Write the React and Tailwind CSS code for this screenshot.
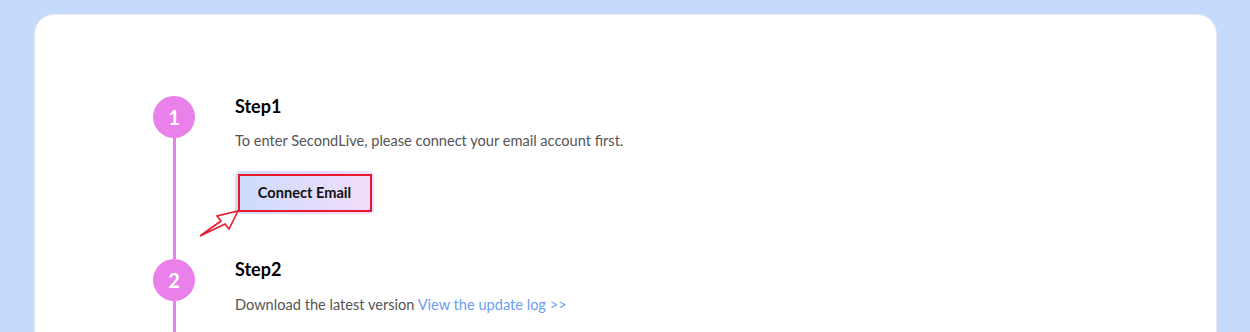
import React from "react";

function StepCircle({ n }) {
  return (
    <span className="flex h-[42px] w-[42px] shrink-0 items-center justify-center rounded-full bg-[#ea80ea] text-[20px] font-bold text-white">
      {n}
    </span>
  );
}

function Arrow() {
  return (
    <svg
      className="pointer-events-none absolute left-[-37px] top-[37px]"
      width="44"
      height="32"
      viewBox="0 0 44 32"
      fill="none"
    >
      <path
        d="M2 28 L23 13 L19 8 L40 3 L31 21 L27 16 Z"
        stroke="#e8192c"
        strokeWidth="1.6"
        strokeLinejoin="miter"
        fill="#ffffff"
      />
    </svg>
  );
}

function Step({ n, title, last, children }) {
  return (
    <div className="flex">
      <div className="flex w-[42px] flex-col items-center">
        <StepCircle n={n} />
        <span className="w-[3px] flex-1 bg-[#ea80ea]" />
      </div>
      <div className={`-mt-[2px] pl-[40px] ${last ? "pb-[80px]" : "pb-[45px]"}`}>
        <h2 className="text-[18px] font-bold leading-[24px] text-black">{title}</h2>
        {children}
      </div>
    </div>
  );
}

export default function App() {
  return (
    <div
      className="min-h-screen bg-[#c6dafd] pl-[34px] pr-[33px] pt-[14px]"
      style={{ fontFamily: "Lato, 'Noto Sans', sans-serif" }}
    >
      <div className="rounded-t-[20px] border border-[#e6e8f0] bg-white pl-[118px] pt-[81px]">
        <Step n="1" title="Step1">
          <p className="mt-[13px] text-[14.6px] leading-[20px] text-[#555555]">
            To enter SecondLive, please connect your email account first.
          </p>
          <div className="relative mt-5 inline-block">
            <button className="h-[43px] w-[139px] rounded-[6px] bg-gradient-to-r from-[#cbdcfd] to-[#f3dcfb] text-[14.6px] font-bold text-[#111111]">
              Connect Email
            </button>
            <span className="pointer-events-none absolute bottom-[2px] left-[3px] right-[2px] top-[3px] border-2 border-[#e8192c]" />
            <Arrow />
          </div>
        </Step>
        <Step n="2" title="Step2" last>
          <p className="mt-[14px] text-[14.6px] leading-[20px] text-[#555555]">
            Download the latest version{" "}
            <a href="#" className="text-[#6b9ef6]">
              View the update log &gt;&gt;
            </a>
          </p>
        </Step>
      </div>
    </div>
  );
}
